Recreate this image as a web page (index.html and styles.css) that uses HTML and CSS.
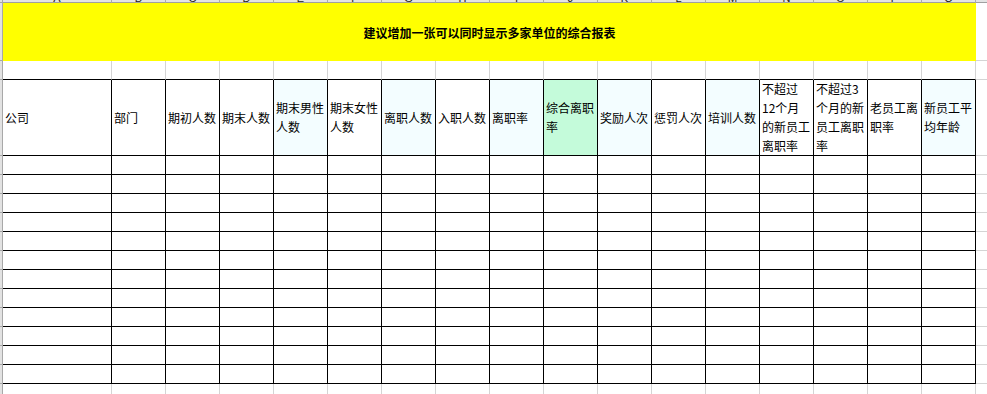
FILE: index.html
```html
<!DOCTYPE html>
<html lang="zh-CN">
<head>
<meta charset="utf-8">
<title>综合报表</title>
<link rel="stylesheet" href="styles.css">
</head>
<body>
<div class="sheet">
  <div class="row strip">
    <div class="rh"></div>
    <div><span>A</span></div><div><span>B</span></div><div><span>C</span></div><div><span>D</span></div>
    <div><span>E</span></div><div><span>F</span></div><div><span>G</span></div><div><span>H</span></div>
    <div><span>I</span></div><div><span>J</span></div><div><span>K</span></div><div><span>L</span></div>
    <div><span>M</span></div><div><span>N</span></div><div><span>O</span></div><div><span>P</span></div>
    <div><span>Q</span></div><div><span>R</span></div>
  </div>

  <div class="row title-row">
    <div class="rh"></div>
    <div class="title">建议增加一张可以同时显示多家单位的综合报表</div>
    <div class="x"></div>
  </div>

  <div class="row blank">
    <div class="rh"></div>
    <div></div><div></div><div></div><div></div><div></div><div></div><div></div><div></div><div></div>
    <div></div><div></div><div></div><div></div><div></div><div></div><div></div><div></div>
    <div class="x"></div>
  </div>

  <div class="row head">
    <div class="rh"></div>
    <div>公司</div>
    <div>部门</div>
    <div>期初人数</div>
    <div>期末人数</div>
    <div class="lt">期末男性<br>人数</div>
    <div>期末女性<br>人数</div>
    <div class="lt">离职人数</div>
    <div>入职人数</div>
    <div class="lt">离职率</div>
    <div class="gr">综合离职<br>率</div>
    <div class="lt">奖励人次</div>
    <div>惩罚人次</div>
    <div class="lt">培训人数</div>
    <div>不超过<br>12个月<br>的新员工<br>离职率</div>
    <div>不超过3<br>个月的新<br>员工离职<br>率</div>
    <div>老员工离<br>职率</div>
    <div class="lt">新员工平<br>均年龄</div>
    <div class="x"></div>
  </div>

  <div class="row data"><div class="rh"></div><div></div><div></div><div></div><div></div><div></div><div></div><div></div><div></div><div></div><div></div><div></div><div></div><div></div><div></div><div></div><div></div><div></div><div class="x"></div></div>
  <div class="row data"><div class="rh"></div><div></div><div></div><div></div><div></div><div></div><div></div><div></div><div></div><div></div><div></div><div></div><div></div><div></div><div></div><div></div><div></div><div></div><div class="x"></div></div>
  <div class="row data"><div class="rh"></div><div></div><div></div><div></div><div></div><div></div><div></div><div></div><div></div><div></div><div></div><div></div><div></div><div></div><div></div><div></div><div></div><div></div><div class="x"></div></div>
  <div class="row data"><div class="rh"></div><div></div><div></div><div></div><div></div><div></div><div></div><div></div><div></div><div></div><div></div><div></div><div></div><div></div><div></div><div></div><div></div><div></div><div class="x"></div></div>
  <div class="row data"><div class="rh"></div><div></div><div></div><div></div><div></div><div></div><div></div><div></div><div></div><div></div><div></div><div></div><div></div><div></div><div></div><div></div><div></div><div></div><div class="x"></div></div>
  <div class="row data"><div class="rh"></div><div></div><div></div><div></div><div></div><div></div><div></div><div></div><div></div><div></div><div></div><div></div><div></div><div></div><div></div><div></div><div></div><div></div><div class="x"></div></div>
  <div class="row data"><div class="rh"></div><div></div><div></div><div></div><div></div><div></div><div></div><div></div><div></div><div></div><div></div><div></div><div></div><div></div><div></div><div></div><div></div><div></div><div class="x"></div></div>
  <div class="row data"><div class="rh"></div><div></div><div></div><div></div><div></div><div></div><div></div><div></div><div></div><div></div><div></div><div></div><div></div><div></div><div></div><div></div><div></div><div></div><div class="x"></div></div>
  <div class="row data"><div class="rh"></div><div></div><div></div><div></div><div></div><div></div><div></div><div></div><div></div><div></div><div></div><div></div><div></div><div></div><div></div><div></div><div></div><div></div><div class="x"></div></div>
  <div class="row data"><div class="rh"></div><div></div><div></div><div></div><div></div><div></div><div></div><div></div><div></div><div></div><div></div><div></div><div></div><div></div><div></div><div></div><div></div><div></div><div class="x"></div></div>
  <div class="row data"><div class="rh"></div><div></div><div></div><div></div><div></div><div></div><div></div><div></div><div></div><div></div><div></div><div></div><div></div><div></div><div></div><div></div><div></div><div></div><div class="x"></div></div>
  <div class="row data"><div class="rh"></div><div></div><div></div><div></div><div></div><div></div><div></div><div></div><div></div><div></div><div></div><div></div><div></div><div></div><div></div><div></div><div></div><div></div><div class="x"></div></div>

  <div class="row empty"><div class="rh"></div><div></div><div></div><div></div><div></div><div></div><div></div><div></div><div></div><div></div><div></div><div></div><div></div><div></div><div></div><div></div><div></div><div></div><div class="x"></div></div>
</div>
</body>
</html>
```

FILE: styles.css
```css
html, body {
  margin: 0;
  padding: 0;
  background: #ffffff;
}

body {
  font-family: "Noto Sans CJK SC", "Noto Sans", sans-serif;
  font-size: 12px;
  color: #000;
  overflow: hidden;
}

.sheet {
  width: 987px;
  height: 394px;
  overflow: hidden;
}

.row {
  display: grid;
  grid-template-columns: 3px 109px repeat(16, 54px) 60px;
}

.row > div {
  box-sizing: border-box;
}

/* column header strip (cut off at the top edge) */
.strip {
  grid-template-rows: 3px;
}

.strip > div {
  background: #e4e4e4;
  border-right: 1px solid #ababab;
  border-bottom: 1px solid #a0a0a0;
  overflow: hidden;
  display: flex;
  justify-content: center;
  align-items: flex-end;
}

.strip span {
  font: 11px/11px "Liberation Sans", sans-serif;
  color: #222;
  margin-bottom: -2px;
}

/* title */
.title-row {
  grid-template-rows: 58px;
}

.title {
  grid-column: span 17;
  background: #ffff00;
  display: flex;
  align-items: center;
  justify-content: center;
  font-weight: bold;
  font-size: 12px;
}

/* blank row under title */
.blank {
  grid-template-rows: 19px;
}

.blank > div {
  border-right: 1px solid #d4d4d4;
  border-bottom: 1px solid #000;
}

/* header row */
.head {
  grid-template-rows: 76px;
}

.head > div {
  border-right: 1px solid #000;
  border-bottom: 1px solid #000;
  padding-left: 2px;
  padding-bottom: 1px;
  display: flex;
  align-items: center;
  line-height: 19px;
  white-space: nowrap;
  min-height: 0;
}

.head > .lt {
  background: #f3fdff;
}

.head > .gr {
  background: #c4fbda;
}

/* data rows */
.data {
  grid-template-rows: 19px;
}

.data > div {
  border-right: 1px solid #000;
  border-bottom: 1px solid #000;
}

/* trailing gridline row */
.empty {
  grid-template-rows: 19px;
}

.empty > div {
  border-right: 1px solid #d4d4d4;
  border-bottom: 1px solid #d4d4d4;
}

/* row header column (cut off at the left edge) */
.row > div.rh {
  border-right: 1px solid #a8a8a8;
  border-bottom: 1px solid #a8a8a8;
  padding: 0;
  background: #e2e2e2;
}

/* partially visible column beyond the table */
.row > div.x {
  border-right: none;
  border-bottom: 1px solid #d4d4d4;
  background: transparent;
  padding: 0;
}
```
